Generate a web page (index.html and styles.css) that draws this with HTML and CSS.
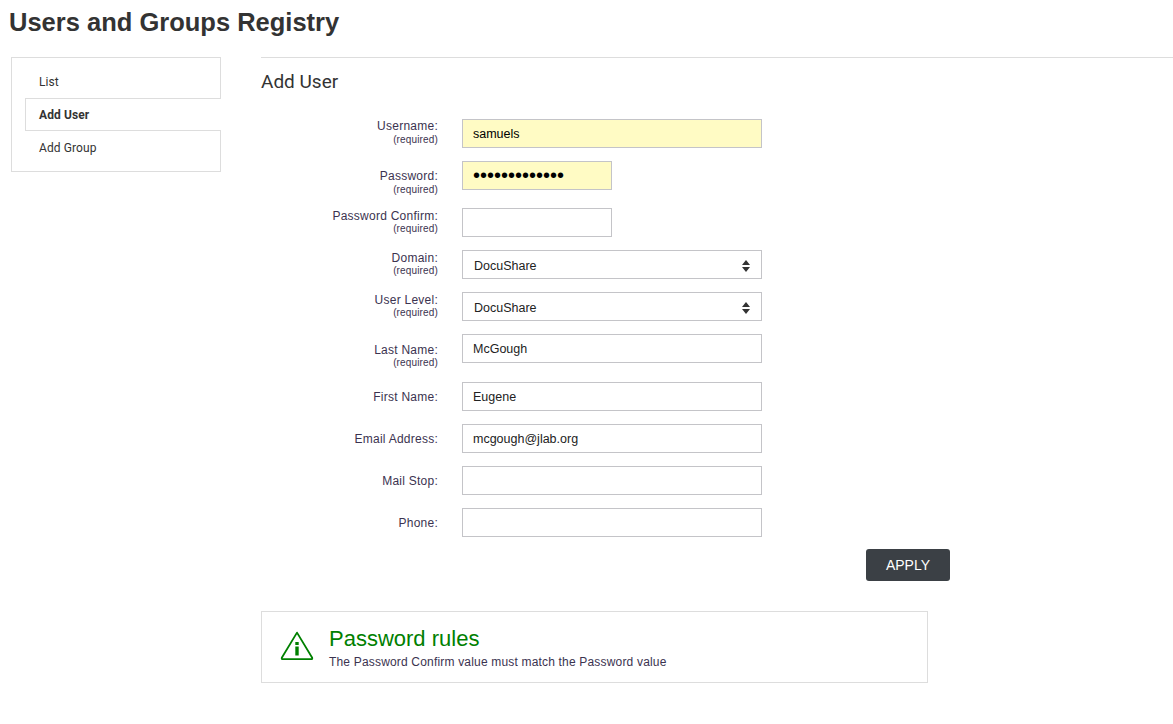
FILE: index.html
```html
<!DOCTYPE html>
<html lang="en">
<head>
  <meta charset="UTF-8" />
  <title>Users and Groups Registry</title>
  <link rel="stylesheet" href="styles.css">
</head>
<body>

  <h1>Users and Groups Registry</h1>

  <div class="layout">
    <ul class="side-nav">
      <li><a href="#">List</a></li>
      <li class="active"><a href="#">Add User</a></li>
      <li><a href="#">Add Group</a></li>
    </ul>

    <div class="content">
      <h2>Add User</h2>

      <form class="user-form">
        <div class="row required first">
          <label for="username">Username:<small>(required)</small></label>
          <input class="filled" type="text" id="username" value="samuels" />
        </div>
        <div class="row tall">
          <label for="password">Password:<small>(required)</small></label>
          <input class="filled short dots" type="password" id="password" value="0123456789abc" />
        </div>
        <div class="row required">
          <label for="confirm">Password Confirm:<small>(required)</small></label>
          <input class="short" type="password" id="confirm" />
        </div>
        <div class="row required">
          <label for="domain">Domain:<small>(required)</small></label>
          <div class="select-wrap">
            <select id="domain"><option>DocuShare</option></select>
            <svg class="updown" width="8" height="12" viewBox="0 0 8 12"><path d="M4 0 8 5H0zM0 7h8l-4 5z"/></svg>
          </div>
        </div>
        <div class="row required">
          <label for="level">User Level:<small>(required)</small></label>
          <div class="select-wrap">
            <select id="level"><option>DocuShare</option></select>
            <svg class="updown" width="8" height="12" viewBox="0 0 8 12"><path d="M4 0 8 5H0zM0 7h8l-4 5z"/></svg>
          </div>
        </div>
        <div class="row tall last-name">
          <label for="lastname">Last Name:<small>(required)</small></label>
          <input type="text" id="lastname" value="McGough" />
        </div>
        <div class="row">
          <label for="firstname">First Name:</label>
          <input type="text" id="firstname" value="Eugene" />
        </div>
        <div class="row">
          <label for="email">Email Address:</label>
          <input type="text" id="email" value="mcgough@jlab.org" />
        </div>
        <div class="row">
          <label for="mailstop">Mail Stop:</label>
          <input type="text" id="mailstop" />
        </div>
        <div class="row">
          <label for="phone">Phone:</label>
          <input type="text" id="phone" />
        </div>
        <div class="actions">
          <button type="button">APPLY</button>
        </div>
      </form>

      <div class="notice">
        <svg class="notice-icon" width="34" height="30" viewBox="0 0 34 30">
          <path d="M17 1.6 32.2 26.8a1 1 0 0 1-.8 1.4H2.6a1 1 0 0 1-.8-1.4z" fill="none" stroke="#008000" stroke-width="1.8" stroke-linejoin="round"/>
          <rect x="15.3" y="11" width="3.4" height="3" fill="#008000"/>
          <rect x="15.3" y="15.5" width="3.4" height="9" fill="#008000"/>
        </svg>
        <div class="notice-text">
          <h3>Password rules</h3>
          <p>The Password Confirm value must match the Password value</p>
        </div>
      </div>
    </div>
  </div>

</body>
</html>
```

FILE: styles.css
```css
* {
  box-sizing: border-box;
}

body {
  margin: 0;
  font-family: "Liberation Sans", Arial, sans-serif;
  font-size: 12px;
  color: #333;
  background-color: #fff;
}

h1 {
  margin: 0;
  padding: 8px 0 0 9px;
  height: 57px;
  font-size: 25.5px;
  line-height: 29px;
  font-weight: bold;
  color: #333;
}

.layout {
  display: flex;
  align-items: flex-start;
}

/* side menu */
.side-nav {
  list-style: none;
  width: 210px;
  margin: 0 40px 0 11px;
  padding: 0;
  height: 115px;
  border: 1px solid #ddd;
  font-family: Roboto, sans-serif;
  letter-spacing: 0.1px;
}

.side-nav li {
  height: 33px;
  margin-left: 13px;
  margin-right: -1px;
}

.side-nav li:first-child {
  height: 41px;
  padding-top: 8px;
  border-bottom: 1px solid #ddd;
}

.side-nav li.active {
  height: 32px;
  background-color: #fff;
  border-left: 1px solid #ddd;
  border-bottom: 1px solid #ddd;
  font-weight: bold;
}

.side-nav a {
  display: block;
  padding-left: 13px;
  line-height: 32px;
  color: #333;
  text-decoration: none;
}

.side-nav li:first-child a,
.side-nav li:last-child a {
  padding-left: 14px;
}

.side-nav li:last-child a {
  line-height: 34px;
}

/* main column */
.content {
  flex: 1;
  border-top: 1px solid #ddd;
}

h2 {
  margin: 0;
  padding-top: 13px;
  height: 61px;
  font-family: Roboto, sans-serif;
  font-size: 19px;
  line-height: 22px;
  font-weight: normal;
  color: #333;
}

.row {
  display: flex;
  align-items: flex-start;
  margin-bottom: 13px;
}

.row label {
  width: 177px;
  margin-right: 24px;
  padding-top: 8px;
  text-align: right;
  line-height: 14px;
  letter-spacing: 0.25px;
  color: #3b3350;
}

.row.required label {
  padding-top: 1px;
}

.row.required.first label {
  padding-top: 0;
}

.row.required small {
  margin-top: -1px;
}

.row.required.first small {
  margin-top: 0;
}

.row.tall label {
  padding-top: 8px;
}

.row.last-name label {
  padding-top: 10px;
  line-height: 13px;
}

.row small {
  display: block;
  font-size: 10px;
  line-height: 13px;
  letter-spacing: 0.15px;
}

.row.tall small {
  margin-top: 1px;
  line-height: 11px;
}

.row.last-name small {
  margin-top: 0;
  line-height: 12px;
}

input,
select {
  width: 300px;
  height: 29px;
  padding: 0 10px;
  border: 1px solid #c4c4c8;
  border-radius: 0;
  background-color: #fff;
  font-family: "Liberation Sans", Arial, sans-serif;
  font-size: 12.5px;
  color: #222;
  outline: none;
}

input.short {
  width: 150px;
}

input.filled {
  background-color: #fffbc4;
  color: #000;
}

input.dots {
  font-size: 20px;
}

.select-wrap {
  position: relative;
  width: 300px;
}

select {
  appearance: none;
  -webkit-appearance: none;
  padding: 2px 10px 0 11px;
}

.updown {
  position: absolute;
  top: 10px;
  right: 12px;
  fill: #333;
}

.actions {
  width: 689px;
  margin-top: -1px;
  text-align: right;
}

button {
  width: 84px;
  height: 32px;
  border: none;
  border-radius: 3px;
  background-color: #3b4045;
  color: #fff;
  font-family: "Liberation Sans", Arial, sans-serif;
  font-size: 14px;
  cursor: pointer;
}

/* rules box */
.notice {
  display: flex;
  align-items: center;
  width: 667px;
  height: 72px;
  margin-top: 30px;
  padding-left: 18px;
  border: 1px solid #ddd;
}

.notice-icon {
  margin-right: 15px;
  margin-top: -2px;
}

.notice-text {
  padding-top: 2px;
}

h3 {
  margin: 0;
  font-size: 22px;
  line-height: 24px;
  font-weight: normal;
  color: #008000;
}

.notice p {
  margin: 4px 0 0;
  line-height: 14px;
  letter-spacing: 0.18px;
  color: #3b3350;
}
```
